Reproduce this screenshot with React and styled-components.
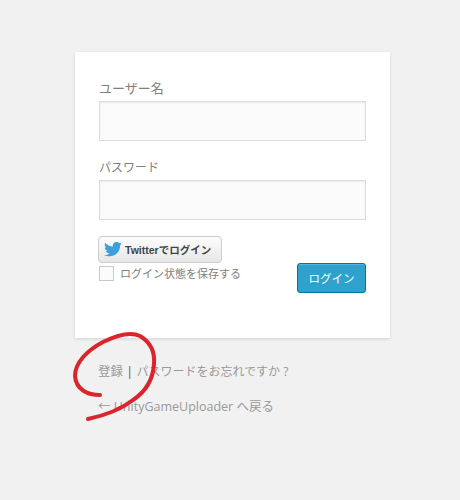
import React from 'react'
import styled, { createGlobalStyle } from 'styled-components'

const GlobalStyle = createGlobalStyle`
  html, body {
    margin: 0;
    padding: 0;
    background: #f1f1f1;
    height: 500px;
    overflow: hidden;
    font-family: "Open Sans", "Noto Sans CJK JP", sans-serif;
  }
  * {
    box-sizing: border-box;
  }
`

const Page = styled.div`
  position: relative;
  width: 460px;
  height: 500px;
  padding: 52px 0 0 75px;
`

const Card = styled.form`
  width: 315px;
  height: 286px;
  padding: 26px 24px 0;
  background: #fff;
  box-shadow: 0 1px 3px rgba(0, 0, 0, 0.13);
`

const Field = styled.div`
  margin-bottom: 16px;
`

const Label = styled.label`
  display: block;
  height: 23px;
  font-size: ${props => props.$size}px;
  line-height: 21px;
  color: #808080;
`

const Input = styled.input`
  display: block;
  width: 267px;
  height: 40px;
  background: #fbfbfb;
  border: 1px solid #ddd;
  box-shadow: inset 0 1px 2px rgba(0, 0, 0, 0.07);
  outline: none;
`

const Bottom = styled.div`
  display: flex;
  justify-content: space-between;
  align-items: flex-start;
  margin-top: 16px;
`

const TwitterButton = styled.button`
  display: flex;
  align-items: center;
  gap: 3px;
  width: 124px;
  height: 27px;
  margin-left: -1px;
  padding: 0 0 0 5px;
  background: linear-gradient(#fdfdfd, #e6e6e6);
  border: 1px solid #ccc;
  border-radius: 4px;
  font-family: "Liberation Sans", "Noto Sans CJK JP", sans-serif;
  font-size: 10.5px;
  font-weight: 700;
  color: #444;
  white-space: nowrap;
`

const Remember = styled.label`
  display: flex;
  align-items: center;
  gap: 6px;
  margin-top: 3px;
  font-size: 11px;
  line-height: 15px;
  color: #808080;
`

const Checkbox = styled.span`
  display: block;
  width: 15px;
  height: 15px;
  background: #fbfbfb;
  border: 1px solid #c9c9c9;
`

const Submit = styled.button`
  width: 69px;
  height: 30px;
  margin-top: 27px;
  padding: 0;
  background: #2ea2cc;
  border: 1px solid #0074a2;
  border-radius: 3px;
  box-shadow: inset 0 1px 0 rgba(120, 200, 230, 0.5);
  font-family: inherit;
  font-size: 11.5px;
  color: #fff;
`

const Nav = styled.p`
  margin: 0;
  padding-left: 23px;
  font-size: 12.5px;
  line-height: 18px;
  color: #999;
`

const LoginNav = styled(Nav)`
  margin-top: 25px;
`

const BackNav = styled(Nav)`
  margin-top: 17px;
`

const Divider = styled.span`
  color: #555;
`

const Forgot = styled.span`
  font-size: 12px;
`

const Scribble = styled.svg`
  position: absolute;
  left: 0;
  top: 0;
  pointer-events: none;
`

const TwitterIcon = () => (
  <svg width="18" height="15" viewBox="0 0 24 20" fill="#3d9fdc">
    <path d="M24 2.4c-.9.4-1.800.7-2.800.8 1-.6 1.800-1.600 2.200-2.700-1 .6-2 1-3.100 1.200C19.300.7 18 0 16.600 0c-2.700 0-4.900 2.200-4.900 4.900 0 .4 0 .8.100 1.100C7.700 5.800 4.100 3.900 1.700.9c-.4.700-.7 1.600-.7 2.500 0 1.700.9 3.200 2.200 4.100-.8 0-1.600-.2-2.200-.6v.1c0 2.400 1.700 4.400 3.900 4.800-.4.100-.8.200-1.300.2-.3 0-.6 0-.9-.1.600 2 2.400 3.400 4.600 3.400-1.700 1.300-3.800 2.100-6.100 2.100-.4 0-.8 0-1.200-.1C2.200 18.200 4.800 19 7.500 19c9.100 0 14-7.500 14-14v-.6c1-.7 1.800-1.500 2.500-2z" />
  </svg>
)

export default function App() {
  return (
    <Page>
      <GlobalStyle />
      <Card onSubmit={e => e.preventDefault()}>
        <Field>
          <Label $size={13}>ユーザー名</Label>
          <Input type="text" />
        </Field>
        <Field>
          <Label $size={12}>パスワード</Label>
          <Input type="password" />
        </Field>
        <Bottom>
          <div>
            <TwitterButton type="button">
              <TwitterIcon />
              Twitterでログイン
            </TwitterButton>
            <Remember>
              <Checkbox />
              ログイン状態を保存する
            </Remember>
          </div>
          <Submit type="submit">ログイン</Submit>
        </Bottom>
      </Card>
      <LoginNav>
        登録 <Divider>|</Divider> <Forgot>パスワードをお忘れですか ?</Forgot>
      </LoginNav>
      <BackNav>← UnityGameUploader へ戻る</BackNav>
      <Scribble width="460" height="500" viewBox="0 0 460 500" fill="none">
        <path
          d="M100 395 C88 395 76 390 75 376 C75 362 88 350 103 342 C115 336 130 331 140 336 C150 342 155 352 154 364 C153 380 145 392 133 400 C120 410 102 416 88 419"
          stroke="#d9252b"
          strokeWidth="4"
          strokeLinecap="round"
        />
      </Scribble>
    </Page>
  )
}
